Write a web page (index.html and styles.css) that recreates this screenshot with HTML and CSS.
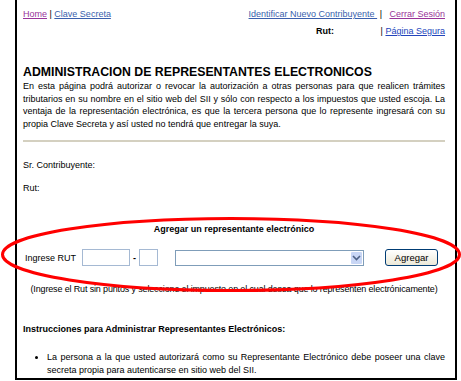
FILE: index.html
```html
<!DOCTYPE html>
<html lang="es">
<head>
    <meta charset="UTF-8">
    <title>Administracion de Representantes Electronicos</title>
    <link rel="stylesheet" href="styles.css">
</head>
<body>

<div class="frame">

    <div class="topbar">
        <div class="top-left">
            <a href="#" class="visited">Home</a> | <a href="#">Clave Secreta</a>
        </div>
        <div class="top-right">
            <div class="top-row">
                <a href="#">Identificar Nuevo Contribuyente&nbsp;</a>&nbsp;|&nbsp;&nbsp; <a href="#" class="visited">Cerrar Sesión</a>
            </div>
            <div class="top-row">
                <b class="rut-top">Rut:</b> | <a href="#" class="secure">Página Segura</a>
            </div>
        </div>
    </div>

    <h1 class="titulo">ADMINISTRACION DE REPRESENTANTES ELECTRONICOS</h1>
    <p class="intro">En esta página podrá autorizar o revocar la autorización a otras personas para que realicen trámites tributarios en su nombre en el sitio web del SII y sólo con respecto a los impuestos que usted escoja. La ventaja de la representación electrónica, es que la tercera persona que lo represente ingresará con su propia Clave Secreta y así usted no tendrá que entregar la suya.</p>

    <hr class="sep">

    <p class="dato first">Sr. Contribuyente:</p>
    <p class="dato">Rut:</p>

    <p class="form-title">Agregar un representante electrónico</p>

    <form class="rut-form">
        <span class="rut-label">Ingrese RUT</span>
        <input type="text" class="in-rut">
        <span class="dash">-</span>
        <input type="text" class="in-dv">
        <div class="select-wrap">
            <select class="in-imp"></select>
            <span class="select-arrow">
                <svg width="9" height="6" viewBox="0 0 9 6"><path d="M1 1 L4.5 4.5 L8 1" fill="none" stroke="#4d6185" stroke-width="1.6"/></svg>
            </span>
        </div>
        <button type="button" class="btn-add">Agregar</button>
    </form>

    <p class="hint">(Ingrese el Rut sin puntos y seleccione el impuesto en el cual desea que lo representen electrónicamente)</p>

    <p class="instr">Instrucciones para Administrar Representantes Electrónicos:</p>
    <ul class="instr-list">
        <li>La persona a la que usted autorizará como su Representante Electrónico debe poseer una clave secreta propia para autenticarse en sitio web del SII.</li>
    </ul>

</div>

<!-- red annotation drawn over the form -->
<svg class="mark" width="461" height="381" viewBox="0 0 461 381">
    <ellipse cx="231" cy="254.5" rx="228.5" ry="36" fill="none" stroke="#f00" stroke-width="3"/>
</svg>

</body>
</html>
```

FILE: styles.css
```css
body {
    margin: 0;
    background: #fff;
    font-family: "Liberation Sans", Arial, sans-serif;
    font-size: 9px;
    color: #000;
    position: relative;
}

.frame {
    margin-left: 15px;
    width: 442px;
    height: 380px;
    box-sizing: border-box;
    border: 2px solid #000;
    border-top: 0;
    padding: 6px 10px 0 6px;
    overflow: hidden;
}

a {
    color: #3a5fad;
}
a.visited {
    color: #993399;
}
a.secure {
    color: #2244bb;
}

.topbar {
    display: flex;
    justify-content: space-between;
    line-height: 17px;
}

.top-right {
    display: flex;
    flex-direction: column;
    align-items: flex-end;
}

.rut-top {
    margin-right: 44px;
}

.titulo {
    font-size: 12.3px;
    line-height: 14px;
    margin: 25px 0 0;
}

.intro {
    margin: 1px 0 0;
    line-height: 12.6px;
    text-align: justify;
}

.sep {
    border: 0;
    height: 2px;
    background: #d4d0c0;
    margin: 10px 0 0;
}

.dato {
    margin: 10px 0 0;
    line-height: 13px;
}
.dato.first {
    margin-top: 16.5px;
}

.form-title {
    margin: 28px 0 0;
    line-height: 13px;
    font-weight: bold;
    text-align: center;
}

.rut-form {
    margin: 13px 0 0;
    display: flex;
    align-items: center;
    height: 18px;
    padding-left: 2px;
}

.rut-label {
    width: 57px;
}

.rut-form input {
    box-sizing: border-box;
    height: 17px;
    border: 1px solid #a5b9d3;
    padding: 0;
    margin: 0;
    background: #fff;
}
.in-rut {
    width: 48px;
}
.in-dv {
    width: 19px;
}
.dash {
    width: 9px;
    text-align: center;
    font-weight: bold;
}

.select-wrap {
    position: relative;
    margin-left: 17px;
    width: 189px;
    height: 16px;
}
.in-imp {
    appearance: none;
    box-sizing: border-box;
    width: 100%;
    height: 16px;
    border: 1px solid #7f9db9;
    background: #fff;
    margin: 0;
}
.select-arrow {
    position: absolute;
    right: 2px;
    top: 2px;
    width: 11px;
    height: 12px;
    background: #c8d6f5;
    border-radius: 1px;
    display: flex;
    align-items: center;
    justify-content: center;
}

.btn-add {
    margin-left: 21px;
    width: 53px;
    height: 17px;
    padding: 0;
    border: 1px solid #003c74;
    border-radius: 3px;
    background: linear-gradient(#ffffff, #ece9d8);
    font-family: "Liberation Sans", Arial, sans-serif;
    font-size: 9.5px;
    color: #000;
}

.hint {
    margin: 16px 0 0;
    line-height: 13px;
    text-align: center;
    white-space: nowrap;
    letter-spacing: -0.15px;
}

.instr {
    margin: 27px 0 0;
    line-height: 13px;
    font-weight: bold;
}

.instr-list {
    margin: 15px 0 0;
    padding-left: 24px;
    line-height: 13px;
    text-align: justify;
}

.mark {
    position: absolute;
    left: 0;
    top: 0;
    pointer-events: none;
}
```
